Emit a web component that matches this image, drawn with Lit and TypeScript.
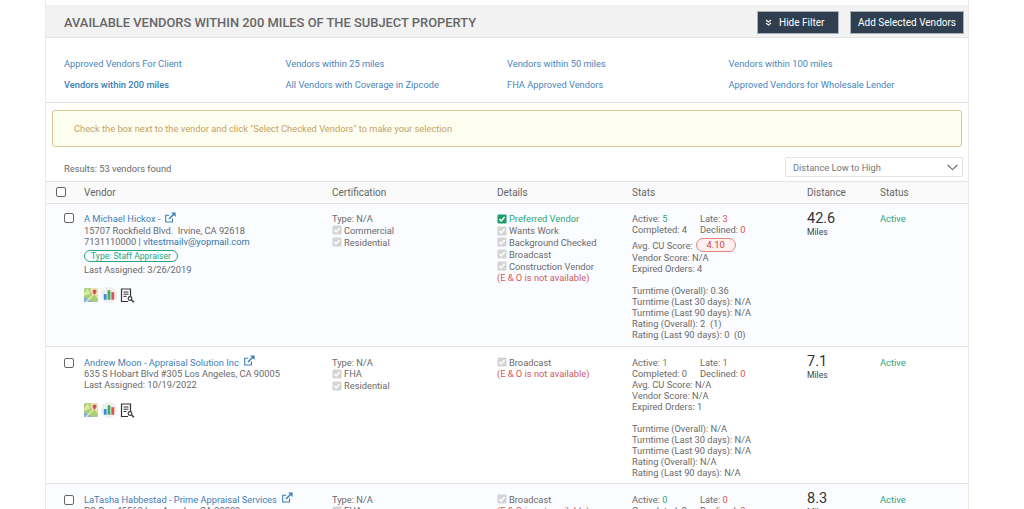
import { LitElement, html, css, svg } from "lit";
import { customElement } from "lit/decorators.js";

interface Vendor {
  name: string;
  address: string;
  contact?: [string, string];
  badge?: string;
  assigned: string;
  cert: string[];
  preferred?: boolean;
  details: string[];
  active: string; late: string; completed: string; declined: string;
  cu?: string; cuPlain: string; vendorScore: string; expired: string;
  overall: string; t30: string; t90: string; rating: string; rating90: string;
  dist: string; h: number;
}

const vendors: Vendor[] = [
  { name: "A Michael Hickox -", address: "15707 Rockfield Blvd.\u00a0 Irvine, CA 92618", contact: ["7131110000 | ", "vltestmailv@yopmail.com"], badge: "Type: Staff Appraiser", assigned: "3/26/2019", cert: ["Commercial", "Residential"], preferred: true, details: ["Wants Work", "Background Checked", "Broadcast", "Construction Vendor"], active: "5", late: "3", completed: "4", declined: "0", cu: "4.10", cuPlain: "", vendorScore: "N/A", expired: "4", overall: "0.36", t30: "N/A", t90: "N/A", rating: "2\u00a0 (1)", rating90: "0\u00a0 (0)", dist: "42.6", h: 143 },
  { name: "Andrew Moon - Appraisal Solution Inc", address: "635 S Hobart Blvd #305 Los Angeles, CA 90005", assigned: "10/19/2022", cert: ["FHA", "Residential"], details: ["Broadcast"], active: "1", late: "1", completed: "0", declined: "0", cuPlain: "N/A", vendorScore: "N/A", expired: "1", overall: "N/A", t30: "N/A", t90: "N/A", rating: "N/A", rating90: "N/A", dist: "7.1", h: 137 },
  { name: "LaTasha Habbestad - Prime Appraisal Services", address: "PO Box 45560 Los Angeles, CA 90009", assigned: "2/11/2021", cert: ["FHA", "Residential"], details: ["Broadcast"], active: "0", late: "0", completed: "2", declined: "0", cuPlain: "N/A", vendorScore: "N/A", expired: "0", overall: "N/A", t30: "N/A", t90: "N/A", rating: "N/A", rating90: "N/A", dist: "8.3", h: 137 },
];

const filters = [
  "Approved Vendors For Client", "Vendors within 25 miles", "Vendors within 50 miles", "Vendors within 100 miles",
  "Vendors within 200 miles", "All Vendors with Coverage in Zipcode", "FHA Approved Vendors", "Approved Vendors for Wholesale Lender",
];

const tick = svg`<path d="M2.6 5.6 4.6 7.6 8.4 3.2" fill="none" stroke-width="1.6"/>`;

@customElement("app-root")
export class AppRoot extends LitElement {
  static styles = css`
    :host { display: block; height: 509px; overflow: hidden; background: #fff; font-family: Roboto, "Liberation Sans", sans-serif; font-size: 9.3px; color: #6a6a6a; }
    .wrap { margin: 0 55px 0 45px; padding-top: 5px; border-left: 1px solid #eaeaea; border-right: 1px solid #eaeaea; }
    .head { height: 33px; box-sizing: border-box; background: #f2f2f2; border-bottom: 1px solid #e4e4e4; display: flex; align-items: center; padding: 0 4px 0 18px; }
    .title { flex: 1; font-size: 12.9px; font-weight: 500; color: #666; position: relative; top: 1px; }
    .btn { height: 23px; box-sizing: border-box; background: #2f3f50; color: #fff; border: 1px solid #a9b2bb; font-size: 10px; display: flex; align-items: center; margin-left: 11px; position: relative; top: 1px; }
    .b1 { width: 82px; padding-left: 7px; gap: 7px; }
    .b2 { width: 114px; justify-content: center; }
    .filters { height: 65px; box-sizing: border-box; border-bottom: 1px solid #dedede; padding: 15px 18px 0; display: grid; grid-template-columns: repeat(4, 221.5px); grid-auto-rows: 21px; align-items: center; color: #4a85bb; font-size: 9.3px; }
    .filters .cur { color: #3a7cb0; font-weight: 500; }
    .alert { margin: 7px 6px 0 6px; height: 37px; box-sizing: border-box; background: #fefef0; border: 1px solid #d9c78f; border-radius: 3px; padding-left: 21px; display: flex; align-items: center; color: #c4a265; }
    .bar { display: flex; justify-content: space-between; align-items: flex-end; height: 34px; box-sizing: border-box; padding: 0 5px 4px 18px; }
    .res { margin-bottom: 3px; }
    .select { width: 178px; height: 20px; box-sizing: border-box; border: 1px solid #e4e4e4; border-radius: 2px; display: flex; justify-content: space-between; align-items: center; padding: 0 4px 0 7px; color: #777; }
    .grid { display: grid; grid-template-columns: 38px 248px 165px 135px 175px 73px 1fr; }
    .thead { height: 23px; box-sizing: border-box; background: #fafafa; border-top: 1px solid #e4e4e4; border-bottom: 1px solid #e4e4e4; align-items: center; color: #666; font-size: 10px; }
    .row { background: #fff; border-bottom: 1px solid #e4e4e4; box-sizing: border-box; padding-top: 9.5px; line-height: 11px; overflow: hidden; }
    .row.tint { background: #fbfcff; }
    .row.lead { padding-top: 9px; }
    .cb { width: 10px; height: 10px; box-sizing: border-box; border: 1px solid #666; border-radius: 2px; background: #fff; margin-left: 10px; }
    .row .cb { margin-top: 1px; margin-left: 18px; }
    .row.lead .cb { margin-top: 0; }
    .thead .cb { margin-top: -1px; }
    .grid > .first { width: 38px; }
    .name { display: flex; align-items: center; gap: 5px; color: #3f7fb5; height: 11.5px; }
    .mail { color: #2f77ad; }
    .badge { display: inline-block; font-size: 8.6px; border: 1px solid #27a77c; border-radius: 7px; color: #27a77c; padding: 0 6px; line-height: 10.7px; margin: 3px 0 2px; }
    .icons { display: flex; align-items: center; margin-top: 12px; }
    .chk { display: flex; align-items: center; gap: 2px; height: 11.8px; }
    .chk svg { flex: none; }
    .type { height: 11.5px; }
    .green { color: #27a77c; }
    .red { color: #d9534f; }
    .eo { color: #cf5a60; }
    .pair { display: grid; grid-template-columns: 68px auto; justify-content: start; }
    .cu { display: flex; align-items: center; gap: 3px; height: 14px; margin-top: 3px; }
    .pill { width: 40px; height: 14px; box-sizing: border-box; border: 1px solid #e4827c; border-radius: 7px; background: #fdf0ef; color: #c9404a; text-align: center; line-height: 12px; }
    .gap { height: 11px; }
    .dist { font-size: 14.5px; color: #333; line-height: 13px; margin-top: -1.5px; }
    .mi { font-size: 8.6px; color: #444; margin-top: 2px; line-height: 10px; }
  `;

  private box(on = false) {
    return html`<svg width="10" height="10" viewBox="0 0 11 11" stroke="#fff">
      <rect x="0.5" y="0.5" width="10" height="10" rx="1.5" fill=${on ? "#1f9c6d" : "#d4d4d4"} stroke="none"></rect>${tick}
    </svg>`;
  }

  private ext() {
    return html`<svg width="11" height="11" viewBox="0 0 11 11" fill="none" stroke="#3f7fb5" style="margin-top:-3px">
      <path d="M7.5 6.5V10H.7V3.2h3.6" stroke-width="1.1"></path>
      <path d="M4 7 9.2 1.8" stroke-width="1.6"></path>
      <path d="M6.2 .6H10.6V5Z" fill="#3f7fb5" stroke="none"></path>
    </svg>`;
  }

  private tools() {
    return html`<div class="icons">
      <svg width="14" height="14" viewBox="0 0 14 14">
        <rect width="14" height="14" rx="1.5" fill="#a9cf7a"></rect>
        <path d="M8 0h6v7H9L6 4Z" fill="#e9e2c8"></path>
        <path d="M0 9 9 14H0Z" fill="#7fb0e0"></path>
        <path d="M4 0 6 6 0 8V5Z" fill="#d8e8a0"></path>
        <path d="M2 14 13 3M7 0l7 10" stroke="#f7e8a0" stroke-width="1.4" fill="none"></path>
        <path d="M10.5 1.5a2 2 0 0 1 2 2c0 1.2-2 3.5-2 3.5s-2-2.3-2-3.5a2 2 0 0 1 2-2Z" fill="#d9534f"></path>
      </svg>
      <svg width="16" height="16" viewBox="0 0 17 17" style="margin-left:3px">
        <circle cx="8.5" cy="8.5" r="8.5" fill="#efefef"></circle>
        <rect x="3" y="7.5" width="3" height="6" fill="#3b8ed0"></rect>
        <rect x="7" y="3.5" width="3" height="10" fill="#3fae5a"></rect>
        <rect x="11" y="5.5" width="3" height="8" fill="#e0524a"></rect>
      </svg>
      <svg width="15" height="15" viewBox="0 0 15 15" fill="none" stroke="#333" style="margin-left:3px">
        <path d="M10.5 8V1H1.5v12.5H8" stroke-width="1.2"></path>
        <path d="M3.5 4h5M3.5 6.2h5M3.5 8.4h3" stroke-width="1"></path>
        <circle cx="10" cy="10.5" r="1.9" stroke-width="1.1"></circle>
        <path d="M11.5 12 14 14.3" stroke-width="1.5"></path>
      </svg>
    </div>`;
  }

  private row(v: Vendor, i: number) {
    return html`<div class="grid row ${i % 2 === 0 ? "tint" : ""} ${i === 0 ? "lead" : ""}" style="height:${v.h}px">
      <div class="first"><div class="cb"></div></div>
      <div>
        <div class="name">${v.name}${this.ext()}</div>
        <div>${v.address}</div>
        ${v.contact ? html`<div>${v.contact[0]}<span class="mail">${v.contact[1]}</span></div>` : ""}
        ${v.badge ? html`<div class="badge">${v.badge}</div>` : ""}
        <div>Last Assigned: ${v.assigned}</div>
        ${this.tools()}
      </div>
      <div>
        <div class="type">Type: N/A</div>
        ${v.cert.map((c) => html`<div class="chk">${this.box()}${c}</div>`)}
      </div>
      <div>
        ${v.preferred ? html`<div class="chk green">${this.box(true)}Preferred Vendor</div>` : ""}
        ${v.details.map((c) => html`<div class="chk">${this.box()}${c}</div>`)}
        <div class="eo">(E &amp; O is not available)</div>
      </div>
      <div>
        <div class="pair"><span>Active: <span class="green">${v.active}</span></span><span>Late: <span class="red">${v.late}</span></span></div>
        <div class="pair"><span>Completed: ${v.completed}</span><span>Declined: <span class="red">${v.declined}</span></span></div>
        ${v.cu
          ? html`<div class="cu">Avg. CU Score: <span class="pill">${v.cu}</span></div>`
          : html`<div>Avg. CU Score: ${v.cuPlain}</div>`}
        <div>Vendor Score: ${v.vendorScore}</div>
        <div>Expired Orders: ${v.expired}</div>
        <div class="gap"></div>
        <div>Turntime (Overall): ${v.overall}</div>
        <div>Turntime (Last 30 days): ${v.t30}</div>
        <div>Turntime (Last 90 days): ${v.t90}</div>
        <div>Rating (Overall): ${v.rating}</div>
        <div>Rating (Last 90 days): ${v.rating90}</div>
      </div>
      <div>
        <div class="dist">${v.dist}</div>
        <div class="mi">Miles</div>
      </div>
      <div class="green">Active</div>
    </div>`;
  }

  render() {
    return html`<div class="wrap">
      <div class="head">
        <div class="title">AVAILABLE VENDORS WITHIN 200 MILES OF THE SUBJECT PROPERTY</div>
        <div class="btn b1">
          <svg width="7" height="7" viewBox="0 0 7 7" fill="none" stroke="#fff" stroke-width="1.1"><path d="M1 1 3.5 3 6 1M1 4 3.5 6 6 4"></path></svg>
          Hide Filter
        </div>
        <div class="btn b2">Add Selected Vendors</div>
      </div>
      <div class="filters">
        ${filters.map((f, i) => html`<div class=${i === 4 ? "cur" : ""}>${f}</div>`)}
      </div>
      <div class="alert">Check the box next to the vendor and click "Select Checked Vendors" to make your selection</div>
      <div class="bar">
        <div class="res">Results: 53 vendors found</div>
        <div class="select">Distance Low to High
          <svg width="11" height="7" viewBox="0 0 11 7" fill="none" stroke="#666" stroke-width="1.1"><path d="M.7 1 5.5 5.6 10.3 1"></path></svg>
        </div>
      </div>
      <div class="grid thead">
        <div class="first"><div class="cb"></div></div>
        <div>Vendor</div><div>Certification</div><div>Details</div><div>Stats</div><div>Distance</div><div>Status</div>
      </div>
      ${vendors.map((v, i) => this.row(v, i))}
    </div>`;
  }
}
